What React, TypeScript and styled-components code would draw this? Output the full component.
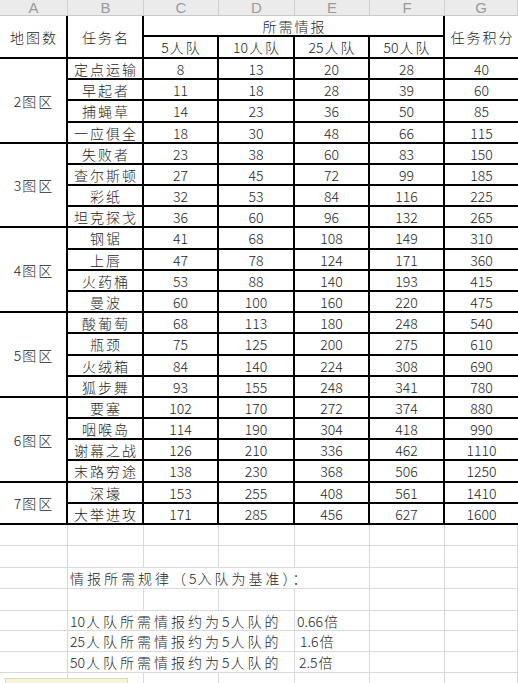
import styled, { createGlobalStyle } from 'styled-components';

const GlobalStyle = createGlobalStyle`
    html, body {
        margin: 0;
        padding: 0;
        background: #ffffff;
        overflow: hidden;
    }
`;

const CJK = `'Noto Sans CJK SC', 'Noto Sans', sans-serif`;

// data rows between the thick lines, heights in px
const ROW_H = [19, 19, 20, 19, 19, 19, 19, 19, 20, 19, 19, 19, 19, 20, 19, 19, 19, 19, 19, 20, 19, 19];
// light grid rows under the table (border included)
const SHEET_H = [21, 22, 21, 22, 20, 21, 21, 21];

type Task = [string, number, number, number, number, number];

const groups: { map: string; tasks: Task[] }[] = [
    {
        map: '2图区',
        tasks: [
            ['定点运输', 8, 13, 20, 28, 40],
            ['早起者', 11, 18, 28, 39, 60],
            ['捕蝇草', 14, 23, 36, 50, 85],
            ['一应俱全', 18, 30, 48, 66, 115],
        ],
    },
    {
        map: '3图区',
        tasks: [
            ['失败者', 23, 38, 60, 83, 150],
            ['查尔斯顿', 27, 45, 72, 99, 185],
            ['彩纸', 32, 53, 84, 116, 225],
            ['坦克探戈', 36, 60, 96, 132, 265],
        ],
    },
    {
        map: '4图区',
        tasks: [
            ['钢锯', 41, 68, 108, 149, 310],
            ['上唇', 47, 78, 124, 171, 360],
            ['火药桶', 53, 88, 140, 193, 415],
            ['曼波', 60, 100, 160, 220, 475],
        ],
    },
    {
        map: '5图区',
        tasks: [
            ['酸葡萄', 68, 113, 180, 248, 540],
            ['瓶颈', 75, 125, 200, 275, 610],
            ['火绒箱', 84, 140, 224, 308, 690],
            ['狐步舞', 93, 155, 248, 341, 780],
        ],
    },
    {
        map: '6图区',
        tasks: [
            ['要塞', 102, 170, 272, 374, 880],
            ['咽喉岛', 114, 190, 304, 418, 990],
            ['谢幕之战', 126, 210, 336, 462, 1110],
            ['末路穷途', 138, 230, 368, 506, 1250],
        ],
    },
    {
        map: '7图区',
        tasks: [
            ['深壕', 153, 255, 408, 561, 1410],
            ['大举进攻', 171, 285, 456, 627, 1600],
        ],
    },
];

const Sheet = styled.div`
    position: relative;
    width: 518px;
    height: 683px;
    overflow: hidden;
    display: flex;
    flex-direction: column;
    font-family: ${CJK};
    font-weight: 300;
`;

const ColumnBar = styled.div`
    display: grid;
    grid-template-columns: 68px 76px 75px 76px 75px 75px 1fr;
    height: 18px;
    box-sizing: border-box;
    background: #ebebeb;
    border-bottom: 1px solid #c9c9c9;
`;

const ColumnLetter = styled.div`
    display: flex;
    align-items: center;
    justify-content: center;
    border-right: 1px solid #cfcfcf;
    color: #9a9a9a;
    font-family: 'Liberation Sans', Arial, sans-serif;
    font-weight: 400;
    font-size: 15px;
    line-height: 1;
`;

const Table = styled.div`
    display: grid;
    grid-template-columns: 66px 74px 73px 74px 73px 73px 73px;
    grid-template-rows: 19px 20px ${ROW_H.map((h) => `${h}px`).join(' ')};
    gap: 2px;
    padding-bottom: 2px;
    background: #000000;
    width: 518px;
`;

const Cell = styled.div<{ $rows?: number; $cols?: number; $text?: boolean }>`
    grid-row: span ${({ $rows }) => $rows ?? 1};
    grid-column: span ${({ $cols }) => $cols ?? 1};
    display: flex;
    align-items: center;
    justify-content: center;
    background: #ffffff;
    color: #1e1e1e;
    font-size: 14px;
    line-height: 1;
    white-space: nowrap;
    letter-spacing: ${({ $text }) => ($text ? '2px' : '0')};
    padding-left: ${({ $text }) => ($text ? '2px' : '0')};
`;

const Digits = styled.span`
    letter-spacing: 0;
    margin-right: 1px;
`;

const Lower = styled.div`
    display: grid;
    grid-template-columns: 68px 76px 75px 76px 75px 75px 1fr;
    grid-template-rows: ${SHEET_H.map((h) => `${h}px`).join(' ')};
`;

const GridCell = styled.div<{ $cols?: number; $indent?: number }>`
    grid-column: span ${({ $cols }) => $cols ?? 1};
    box-sizing: border-box;
    display: flex;
    align-items: center;
    border-right: 1px solid #dadada;
    border-bottom: 1px solid #dadada;
    padding-left: ${({ $indent }) => $indent ?? 0}px;
    color: #262626;
    font-size: 14px;
    letter-spacing: 3px;
    white-space: nowrap;
    line-height: 1;
`;

const Note = styled.div`
    position: absolute;
    left: 5px;
    top: 678px;
    width: 123px;
    height: 10px;
    box-sizing: border-box;
    background: #f7f5d9;
    border: 1px solid #dddab8;
`;

// keeps digit runs tight while CJK characters stay spaced out
function Txt({ children }: { children: string }) {
    return (
        <>
            {children.split(/(\d+(?:\.\d+)?)/).map((part, i) =>
                /^\d/.test(part) ? <Digits key={i}>{part}</Digits> : part
            )}
        </>
    );
}

function EmptyCells({ count }: { count: number }) {
    return (
        <>
            {Array.from({ length: count }, (_, i) => (
                <GridCell key={i} />
            ))}
        </>
    );
}

function Row({ group, span, task }: { group?: string; span: number; task: Task }) {
    const [name, ...values] = task;
    return (
        <>
            {group && (
                <Cell $rows={span} $text>
                    <Txt>{group}</Txt>
                </Cell>
            )}
            <Cell $text>{name}</Cell>
            {values.map((v, i) => (
                <Cell key={i}>{v}</Cell>
            ))}
        </>
    );
}

export default function App() {
    return (
        <>
            <GlobalStyle />
            <Sheet>
                <ColumnBar>
                    {['A', 'B', 'C', 'D', 'E', 'F', 'G'].map((l) => (
                        <ColumnLetter key={l}>{l}</ColumnLetter>
                    ))}
                </ColumnBar>

                <Table>
                    <Cell $rows={2} $text>
                        地图数
                    </Cell>
                    <Cell $rows={2} $text>
                        任务名
                    </Cell>
                    <Cell $cols={4} $text>
                        所需情报
                    </Cell>
                    <Cell $rows={2} $text>
                        任务积分
                    </Cell>
                    {['5人队', '10人队', '25人队', '50人队'].map((t) => (
                        <Cell key={t} $text>
                            <Txt>{t}</Txt>
                        </Cell>
                    ))}

                    {groups.map((g) =>
                        g.tasks.map((t, i) => (
                            <Row key={t[0]} group={i === 0 ? g.map : undefined} span={g.tasks.length} task={t} />
                        ))
                    )}
                </Table>

                <Lower>
                    <EmptyCells count={7} />
                    <EmptyCells count={7} />

                    <GridCell />
                    <GridCell $cols={4} $indent={2}>
                        <Txt>情报所需规律（5入队为基准）：</Txt>
                    </GridCell>
                    <EmptyCells count={2} />

                    <EmptyCells count={7} />

                    <GridCell />
                    <GridCell $cols={3} $indent={2}>
                        <Txt>10人队所需情报约为5人队的</Txt>
                    </GridCell>
                    <GridCell $indent={2}>
                        <Txt>0.66倍</Txt>
                    </GridCell>
                    <EmptyCells count={2} />

                    <GridCell />
                    <GridCell $cols={3} $indent={2}>
                        <Txt>25人队所需情报约为5人队的</Txt>
                    </GridCell>
                    <GridCell $indent={5}>
                        <Txt>1.6倍</Txt>
                    </GridCell>
                    <EmptyCells count={2} />

                    <GridCell />
                    <GridCell $cols={3} $indent={2}>
                        <Txt>50人队所需情报约为5人队的</Txt>
                    </GridCell>
                    <GridCell $indent={4}>
                        <Txt>2.5倍</Txt>
                    </GridCell>
                    <EmptyCells count={2} />

                    <EmptyCells count={7} />
                </Lower>

                <Note />
            </Sheet>
        </>
    );
}
